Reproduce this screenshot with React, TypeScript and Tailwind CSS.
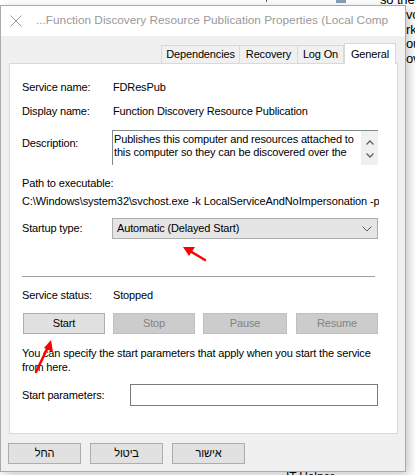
import React from "react";

function CloseIcon() {
  return (
    <svg width="12" height="12" viewBox="0 0 12 12" className="shrink-0">
      <path d="M0.5 0.5 L11.5 11.5 M11.5 0.5 L0.5 11.5" stroke="#9a9a9a" strokeWidth="1" fill="none" />
    </svg>
  );
}

function Caret({ down }: { down?: boolean }) {
  return (
    <svg width="8" height="5" viewBox="0 0 8 5">
      <path
        d={down ? "M0.5 0.5 L4 4 L7.5 0.5" : "M0.5 4.5 L4 1 L7.5 4.5"}
        stroke="#606060"
        strokeWidth="1.3"
        fill="none"
      />
    </svg>
  );
}

function Tab({ label, active, className }: { label: string; active?: boolean; className?: string }) {
  return (
    <div
      className={
        active
          ? "relative z-10 -mb-px flex h-[21px] items-start justify-center border border-b-0 border-[#d9d9d9] bg-white pt-[2px] " + (className ?? "")
          : "flex h-[18px] items-center justify-center border border-b-0 border-[#d9d9d9] bg-[#f0f0f0] " + (className ?? "")
      }
    >
      {label}
    </div>
  );
}

function Btn({ label, disabled, className }: { label: string; disabled?: boolean; className?: string }) {
  return (
    <div
      className={
        (disabled
          ? "border-[#bfbfbf] bg-[#cccccc] text-[#838383] "
          : "border-[#adadad] bg-[#e1e1e1] text-black ") +
        "flex h-[21px] items-center justify-center border " +
        (className ?? "")
      }
    >
      {label}
    </div>
  );
}

export default function App() {
  return (
    <div className="relative h-[475px] w-[415px] overflow-hidden bg-white font-['Liberation_Sans','DejaVu_Sans',sans-serif] text-[11px] tracking-[-0.15px] text-black">
      {/* desktop text peeking out behind the dialog */}
      <div className="absolute left-[380px] top-[-7px] text-[13px] leading-[14px] whitespace-nowrap">so they</div>
      <div className="absolute left-[406px] top-[8px] flex flex-col text-[13px] leading-[14.5px] whitespace-nowrap">
        <span>vo</span>
        <span>rk</span>
        <span>ou</span>
        <span>ov</span>
      </div>
      <div className="absolute left-[266px] top-[-3px] h-[5px] w-px bg-[#555]" />
      <div className="absolute left-[336px] top-0 h-[3px] w-[10px] bg-[#8aa0b8]" />
      <div className="absolute left-[286px] top-[471px] text-[12px] leading-[13px] whitespace-nowrap">IT Helper</div>

      {/* properties dialog */}
      <div className="relative mt-[5px] flex h-[467px] w-[406px] flex-col border border-[#aaaaaa] bg-[#f0f0f0] shadow-[3px_3px_10px_rgba(0,0,0,0.22)]">
        <div className="flex h-[30px] shrink-0 items-center gap-[14px] bg-white pl-[9px] text-[11.8px] tracking-normal text-[#999999]">
          <CloseIcon />
          <span className="whitespace-nowrap">...Function Discovery Resource Publication Properties (Local Comp</span>
        </div>

        <div className="ml-[8px] mr-[7px] mt-[7px] flex flex-col">
          <div className="flex items-end justify-end pr-[2px]">
            <Tab label="Dependencies" className="w-[79px]" />
            <Tab label="Recovery" className="w-[58px] border-l-0" />
            <Tab label="Log On" className="w-[46px] border-l-0" />
            <Tab label="General" active className="w-[52px]" />
          </div>

          <div className="flex h-[371px] flex-col border border-[#d9d9d9] bg-white pl-[12px]">
            <div className="mt-[15px] flex h-[16px] items-center">
              <span className="w-[91px]">Service name:</span>
              <span>FDResPub</span>
            </div>
            <div className="mt-[8px] flex h-[16px] items-center">
              <span className="w-[91px]">Display name:</span>
              <span>Function Discovery Resource Publication</span>
            </div>

            <div className="mt-[11px] flex items-start">
              <span className="w-[90px] shrink-0 pt-[5px]">Description:</span>
              <div className="flex h-[35px] w-[266px] shrink-0 border-l border-t border-[#828790]">
                <div className="h-[29px] flex-1 overflow-hidden pl-px pt-[2px] leading-[13px]">
                  Publishes this computer and resources attached to this computer so they can be discovered over the network.
                </div>
                <div className="flex w-[17px] flex-col items-center gap-[8px] bg-[#f0f0f0] pt-[9px]">
                  <Caret />
                  <Caret down />
                </div>
              </div>
            </div>

            <div className="mt-[10px] h-[16px] leading-[16px]">Path to executable:</div>
            <div className="mt-[2px] h-[16px] w-[357px] overflow-hidden whitespace-nowrap leading-[16px] tracking-[-0.1px]">
              C:\Windows\system32\svchost.exe -k LocalServiceAndNoImpersonation -p
            </div>

            <div className="mt-[9px] flex items-center">
              <span className="w-[90px] shrink-0">Startup type:</span>
              <div className="flex h-[21px] w-[266px] shrink-0 items-center justify-between border border-[#adadad] bg-[#e5e5e5] pl-[4px] pr-[5px]">
                <span>Automatic (Delayed Start)</span>
                <svg width="10" height="6" viewBox="0 0 10 6">
                  <path d="M0.5 0.5 L5 5 L9.5 0.5" stroke="#5a5a5a" strokeWidth="1" fill="none" />
                </svg>
              </div>
            </div>

            <div className="mt-[37px] h-px w-[353px] bg-[#a0a0a0]" />

            <div className="mt-[10px] flex h-[16px] items-center">
              <span className="w-[91px]">Service status:</span>
              <span>Stopped</span>
            </div>

            <div className="mt-[10px] flex gap-[8px] pl-px">
              <Btn label="Start" className="w-[82px]" />
              <Btn label="Stop" disabled className="w-[82px]" />
              <Btn label="Pause" disabled className="w-[84px]" />
              <Btn label="Resume" disabled className="ml-px w-[82px]" />
            </div>

            <div className="mt-[12px] w-[360px] leading-[14px]">
              You can specify the start parameters that apply when you start the service from here.
            </div>

            <div className="mt-[10px] flex items-center">
              <span className="w-[108px] shrink-0">Start parameters:</span>
              <div className="h-[22px] w-[248px] shrink-0 border border-[#7a7a7a] bg-white" />
            </div>
          </div>
        </div>

        <div className="ml-[7px] mt-[9px] flex gap-[9px]" dir="ltr">
          <Btn label="החל" className="w-[73px]" />
          <Btn label="ביטול" className="w-[73px]" />
          <Btn label="אישור" className="w-[73px]" />
        </div>
      </div>

      {/* red annotation arrows */}
      <svg className="pointer-events-none absolute left-0 top-0" width="415" height="475" viewBox="0 0 415 475">
        <path d="M205 260 L190 251" stroke="#ff0000" strokeWidth="2.5" strokeLinecap="round" />
        <path d="M183 247 L195 247 L189 256 Z" fill="#ff0000" />
        <path d="M36 372 L47 349" stroke="#ff0000" strokeWidth="2.5" strokeLinecap="round" />
        <path d="M51 340 L53 352 L44 348 Z" fill="#ff0000" />
      </svg>
    </div>
  );
}
